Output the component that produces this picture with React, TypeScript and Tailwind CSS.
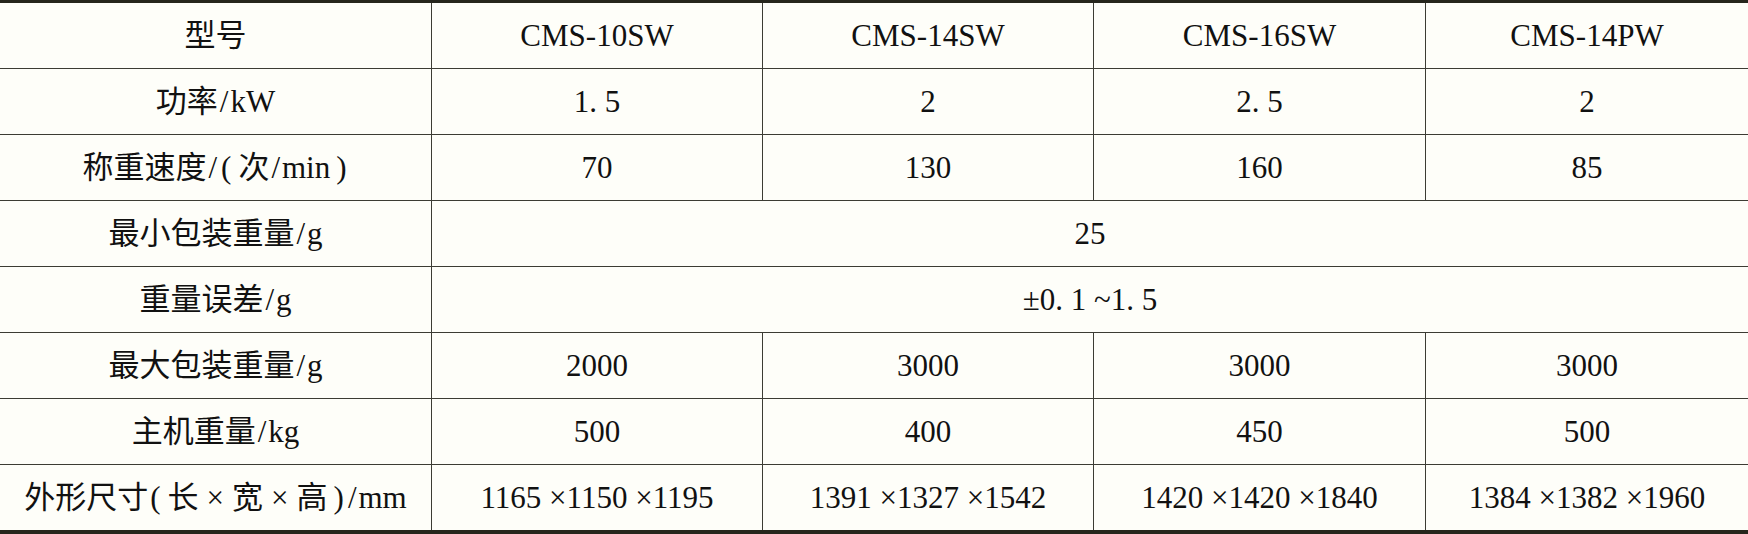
// Specification table for CMS series weighing machines

const cols = "grid grid-cols-[431px_331px_331px_332px_323px]";

type Row = { label: React.ReactNode; key: string; values: string[] };

// slash, brackets and times sign spaced like the typeset original
const S = () => <span className="mx-[2px]">/</span>;
const L = () => <span className="ml-[2px] mr-[7px]">(</span>;
const R = () => <span className="ml-[6px] mr-[2px]">)</span>;
const X = () => <span className="mx-[8px]">×</span>;

const rows: Row[] = [
  { key: "model", label: "型号", values: ["CMS-10SW", "CMS-14SW", "CMS-16SW", "CMS-14PW"] },
  { key: "power", label: <>功率<S />kW</>, values: ["1. 5", "2", "2. 5", "2"] },
  {
    key: "speed",
    label: <>称重速度<S /><L />次<S />min<R /></>,
    values: ["70", "130", "160", "85"],
  },
  { key: "min", label: <>最小包装重量<S />g</>, values: ["25"] },
  { key: "err", label: <>重量误差<S />g</>, values: ["±0. 1 ~1. 5"] },
  { key: "max", label: <>最大包装重量<S />g</>, values: ["2000", "3000", "3000", "3000"] },
  { key: "host", label: <>主机重量<S />kg</>, values: ["500", "400", "450", "500"] },
  {
    key: "size",
    label: <>外形尺寸<L />长<X />宽<X />高<R /><S />mm</>,
    values: ["1165 ×1150 ×1195", "1391 ×1327 ×1542", "1420 ×1420 ×1840", "1384 ×1382 ×1960"],
  },
];

export default function App() {
  return (
    <div
      className="w-[1748px] h-[534px] bg-[#fefef9] text-[#111] text-[31px] leading-none"
      style={{ fontFamily: "'Liberation Serif', 'Noto Sans CJK SC', serif" }}
    >
      <div className="border-t-[3px] border-b-[4px] border-[#26261c] flex flex-col">
        {rows.map((row, i) => (
          <div
            key={row.key}
            className={`${cols} h-[65px] ${i < rows.length - 1 ? "border-b border-[#3c3c34]" : ""} box-content`}
          >
            <div className="flex items-center justify-center whitespace-nowrap">{row.label}</div>
            {row.values.length === 1 ? (
              <div className="col-span-4 flex items-center justify-center border-l border-[#3c3c34]">
                {row.values[0]}
              </div>
            ) : (
              row.values.map((v, j) => (
                <div
                  key={j}
                  className="flex items-center justify-center border-l border-[#3c3c34] whitespace-nowrap"
                >
                  {v}
                </div>
              ))
            )}
          </div>
        ))}
      </div>
    </div>
  );
}
